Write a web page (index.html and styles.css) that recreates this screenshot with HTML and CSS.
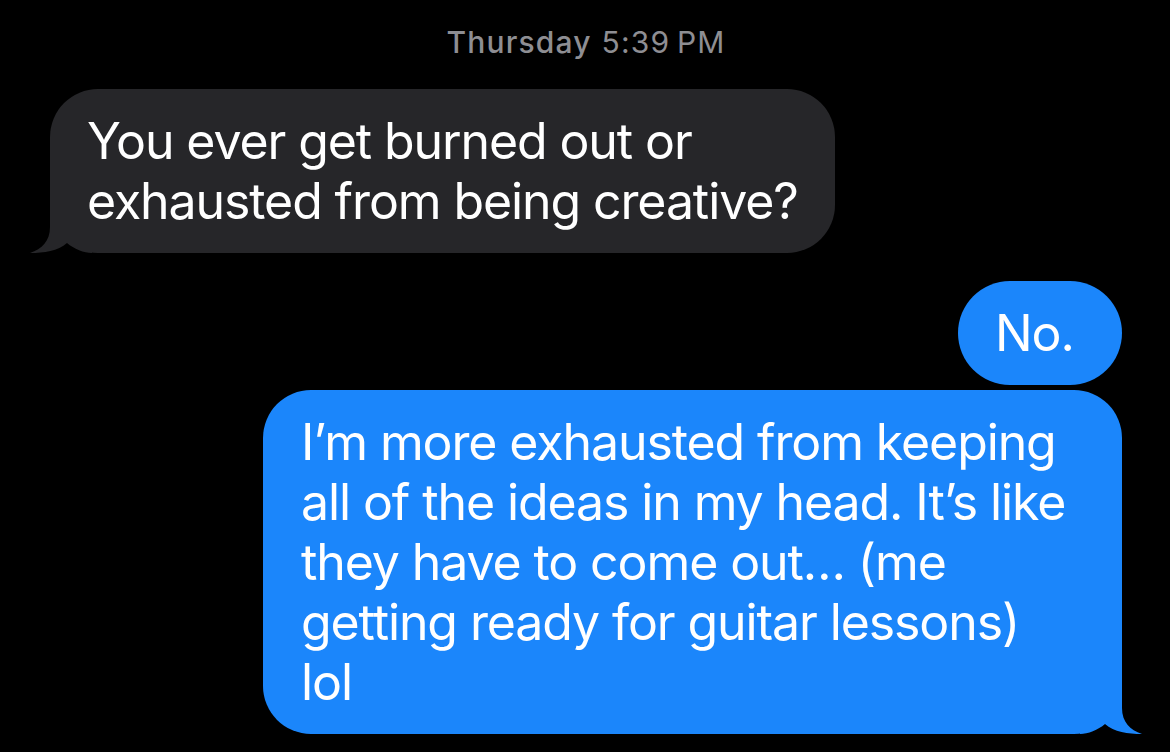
FILE: index.html
```html
<!DOCTYPE html>
<html lang="en">
<head>
  <meta charset="UTF-8">
  <meta name="viewport" content="width=device-width, initial-scale=1.0">
  <title>Messages</title>
  <link rel="stylesheet" href="styles.css">
</head>
<body>

  <!-- Conversation -->
  <div class="thread">
    <div class="stamp"><b>Thursday</b> 5:39&#8239;PM</div>

    <div class="bubble received">
      You ever get burned out or<br>exhausted from being creative?
      <svg class="tail tail-left" width="70" height="50" viewBox="0 0 70 50">
        <path d="M20,0 L20,24 C20,38 12,46 0,50 C14,50 28,48 37,40 C44,46 54,50 62,50 L62,0 Z" fill="#262629"/>
      </svg>
    </div>

    <div class="bubble sent short">No.</div>

    <div class="bubble sent long">
      I’m more exhausted from keeping<br>all of the ideas in my head. It’s like<br>they have to come out… (me<br>getting ready for guitar lessons)<br>lol
      <svg class="tail tail-right" width="70" height="50" viewBox="0 0 70 50">
        <path d="M50,0 L50,24 C50,38 58,46 70,50 C56,50 42,48 33,40 C26,46 16,50 8,50 L8,0 Z" fill="#1b86fb"/>
      </svg>
    </div>
  </div>

</body>
</html>
```
FILE: styles.css
```css
/* General Styles */
* {
  margin: 0;
  padding: 0;
  box-sizing: border-box;
}

body {
  font-family: Inter, "Noto Sans", sans-serif;
  background-color: #000;
  color: #fff;
  height: 100vh;
  overflow: hidden;
}

/* Thread */
.thread {
  display: flex;
  flex-direction: column;
  padding: 24px 48px 0 50px;
}

.stamp {
  text-align: center;
  font-size: 30px;
  line-height: 36px;
  letter-spacing: 0.04em;
  color: #8e8e93;
  margin-bottom: 29px;
}

.stamp b {
  font-weight: 500;
}

/* Bubbles */
.bubble {
  position: relative;
  z-index: 0;
  font-size: 50px;
  line-height: 60px;
  letter-spacing: -0.022em;
  white-space: nowrap;
  padding: 22px 36px 22px 37px;
  border-radius: 48px;
}

.received {
  align-self: flex-start;
  width: 785px;
  background-color: #262629;
}

.sent {
  align-self: flex-end;
  background-color: #1b86fb;
}

.short {
  width: 164px;
  height: 104px;
  border-radius: 52px;
  margin-top: 28px;
}

.long {
  width: 859px;
  margin-top: 5px;
  padding-left: 38px;
}

/* tail sits behind the text but over the bubble */
.tail {
  position: absolute;
  bottom: 0;
  z-index: -1;
}

.tail-left {
  left: -20px;
}

.tail-right {
  right: -20px;
}
```
